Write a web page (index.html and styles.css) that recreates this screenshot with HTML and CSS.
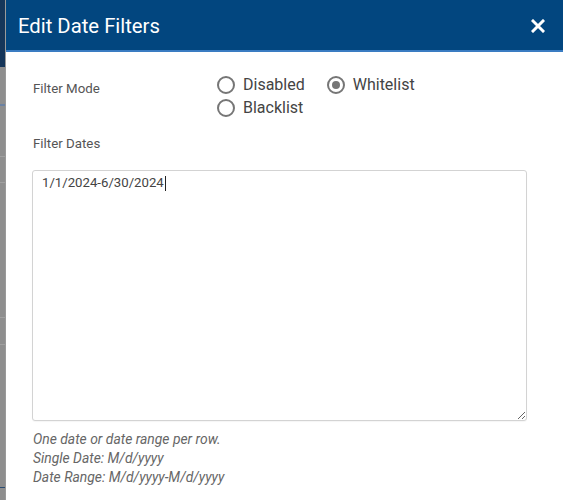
FILE: index.html
```html
<!DOCTYPE html>
<html>
<head>
<meta charset="utf-8">
<link rel="stylesheet" href="styles.css">
</head>
<body>
<div class="page">
  <aside class="backdrop">
    <div class="bd-top"></div>
    <div class="bd-seg h37"></div>
    <div class="bd-line blue"></div>
    <div class="bd-seg h50"></div>
    <div class="bd-line"></div>
    <div class="bd-seg h25"></div>
    <div class="bd-line"></div>
    <div class="bd-seg h134"></div>
    <div class="bd-line"></div>
    <div class="bd-seg h26"></div>
    <div class="bd-line"></div>
    <div class="bd-seg h142"></div>
    <div class="bd-line navy"></div>
    <div class="bd-seg grow"></div>
  </aside>
  <section class="dialog">
    <header class="dialog-header">
      <h1 class="dialog-title">Edit Date Filters</h1>
      <button class="close-btn" aria-label="Close">
        <svg width="14" height="14" viewBox="0 0 14 14"><path d="M2 2 L12 12 M12 2 L2 12" stroke="#fff" stroke-width="3" stroke-linecap="square" fill="none"/></svg>
      </button>
    </header>
    <div class="dialog-body">
      <div class="form-row mode-row">
        <div class="field-label mode-label">Filter Mode</div>
        <div class="radio-group">
          <label class="radio"><span class="ring"></span><span class="radio-text">Disabled</span></label>
          <label class="radio"><span class="ring checked"></span><span class="radio-text">Whitelist</span></label>
          <label class="radio"><span class="ring"></span><span class="radio-text">Blacklist</span></label>
        </div>
      </div>
      <div class="field-label dates-label">Filter Dates</div>
      <div class="textarea-wrap">
        <textarea class="dates-input" spellcheck="false">1/1/2024-6/30/2024</textarea>
        <span class="caret"></span>
      </div>
      <div class="help">
        <div>One date or date range per row.</div>
        <div>Single Date: M/d/yyyy</div>
        <div>Date Range: M/d/yyyy-M/d/yyyy</div>
      </div>
    </div>
  </section>
</div>
</body>
</html>
```
FILE: styles.css
```css
html, body {
  margin: 0;
  padding: 0;
  background: #fff;
}
.page {
  display: flex;
  width: 563px;
  height: 500px;
  overflow: hidden;
  font-family: Roboto, "Liberation Sans", sans-serif;
}
.backdrop {
  width: 6px;
  flex: none;
  display: flex;
  flex-direction: column;
  background: #8e8e8e;
  border-right: 1px solid #9a9a9a;
  box-sizing: border-box;
}
.bd-top { height: 67px; background: #15365a; }
.bd-seg { background: #8e8e8e; }
.h37 { height: 37px; }
.h50 { height: 50px; }
.h25 { height: 25px; }
.h134 { height: 134px; }
.h26 { height: 26px; }
.h142 { height: 142px; }
.grow { flex: 1; }
.bd-line { height: 1px; background: #a0a0a0; }
.bd-line.blue { height: 2px; background: #6b82a3; }
.bd-line.navy { background: #2a4c72; }

.dialog {
  flex: 1;
  display: flex;
  flex-direction: column;
  background: #fff;
}
.dialog-header {
  height: 50px;
  background: #02467f;
  border-top: 1px solid #0b3a68;
  border-bottom: 2px solid #3a7cc2;
  display: flex;
  align-items: center;
  justify-content: space-between;
  padding: 0 18px 0 12px;
  box-sizing: content-box;
  margin-top: -1px;
}
.dialog-title {
  margin: 0;
  color: #fff;
  font-size: 20.3px;
  font-weight: 400;
  line-height: 24px;
  padding-top: 2px;
}
.close-btn {
  background: none;
  border: none;
  padding: 0;
  width: 14px;
  height: 14px;
  display: flex;
  margin-top: 1px;
}
.dialog-body {
  padding: 21px 30px 0 27px;
}
.form-row {
  display: flex;
}
.field-label {
  font-size: 13.3px;
  color: #555;
  line-height: 16px;
}
.mode-label {
  width: 184px;
  padding-top: 8px;
}
.radio-group {
  display: flex;
  flex-wrap: wrap;
  width: 200px;
  column-gap: 22px;
}
.radio {
  display: flex;
  align-items: center;
  height: 23px;
  gap: 8px;
}
.ring {
  width: 18px;
  height: 18px;
  box-sizing: border-box;
  border: 2px solid #767676;
  border-radius: 50%;
  display: flex;
  align-items: center;
  justify-content: center;
}
.ring.checked::after {
  content: "";
  width: 8px;
  height: 8px;
  border-radius: 50%;
  background: #767676;
}
.radio-text {
  font-size: 16px;
  color: #444;
  line-height: 20px;
}
.dates-label {
  margin-top: 17px;
}
.textarea-wrap {
  position: relative;
  margin-top: 18px;
  margin-left: -1px;
  width: 495px;
}
.dates-input {
  display: block;
  width: 495px;
  height: 251px;
  box-sizing: border-box;
  border: 1px solid #d3d3d3;
  border-radius: 3px;
  padding: 4px 9px;
  font-family: Roboto, "Liberation Sans", sans-serif;
  font-size: 13.2px;
  line-height: 16px;
  color: #444;
  resize: both;
  outline: none;
  box-shadow: 0 1px 1px rgba(0,0,0,0.04);
}
.caret {
  position: absolute;
  left: 133px;
  top: 6px;
  width: 1px;
  height: 15px;
  background: #222;
}
.help {
  margin-top: 9px;
  font-size: 13.9px;
  font-style: italic;
  line-height: 19px;
  color: #666;
}
```
